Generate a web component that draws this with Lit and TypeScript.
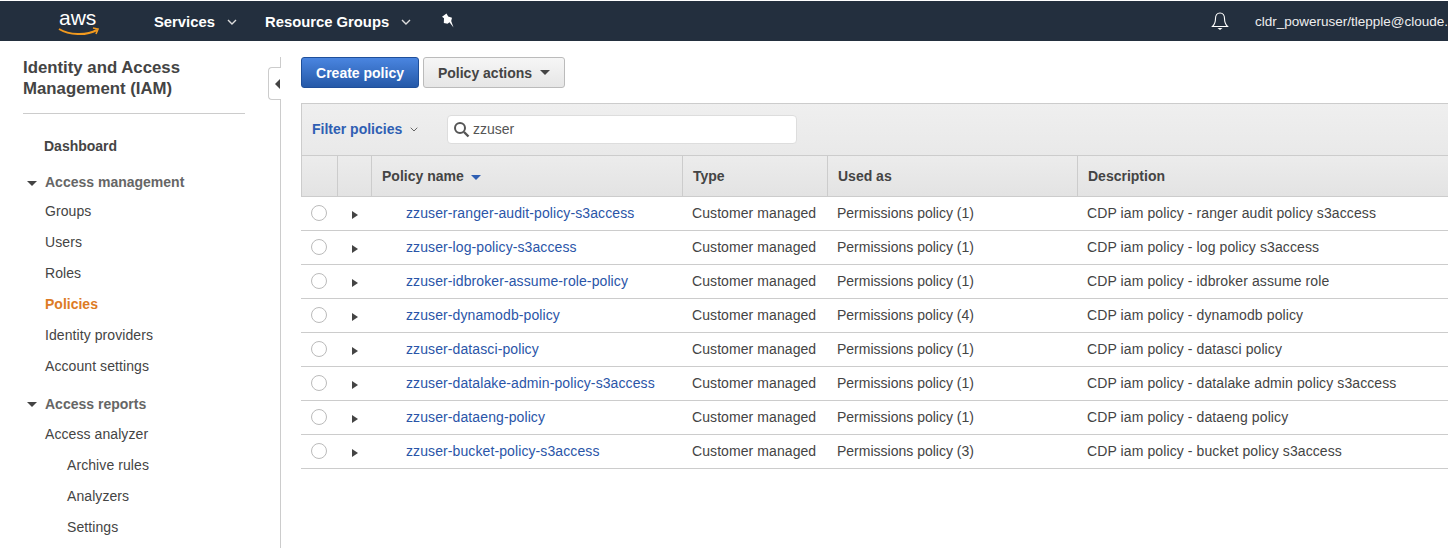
import { LitElement, html, css, svg } from "lit";
import { customElement } from "lit/decorators.js";

const rows = [
  ["zzuser-ranger-audit-policy-s3access", "Permissions policy (1)", "CDP iam policy - ranger audit policy s3access"],
  ["zzuser-log-policy-s3access", "Permissions policy (1)", "CDP iam policy - log policy s3access"],
  ["zzuser-idbroker-assume-role-policy", "Permissions policy (1)", "CDP iam policy - idbroker assume role"],
  ["zzuser-dynamodb-policy", "Permissions policy (4)", "CDP iam policy - dynamodb policy"],
  ["zzuser-datasci-policy", "Permissions policy (1)", "CDP iam policy - datasci policy"],
  ["zzuser-datalake-admin-policy-s3access", "Permissions policy (1)", "CDP iam policy - datalake admin policy s3access"],
  ["zzuser-dataeng-policy", "Permissions policy (1)", "CDP iam policy - dataeng policy"],
  ["zzuser-bucket-policy-s3access", "Permissions policy (3)", "CDP iam policy - bucket policy s3access"],
];

const chevron = svg`<svg class="chev" width="10" height="6" viewBox="0 0 10 6"><path d="M1 1l4 4 4-4" fill="none" stroke="currentColor" stroke-width="1.4"/></svg>`;
const smallChevron = svg`<svg class="chev" width="8" height="5" viewBox="0 0 8 5"><path d="M.7.7L4 4 7.300.7" fill="none" stroke="currentColor" stroke-width="1"/></svg>`;

@customElement("app-root")
export class AppRoot extends LitElement {
  static styles = css`
    :host {
      display: block;
      width: 1448px;
      height: 548px;
      overflow: hidden;
      background: #fff;
      font-family: "Liberation Sans", Arial, sans-serif;
      font-size: 14px;
      color: #444;
    }
    .top {
      margin-top: 1px;
      height: 40px;
      background: #232f3e;
      color: #fff;
      display: flex;
      align-items: center;
      white-space: nowrap;
      overflow: hidden;
    }
    .top > * { flex: none; }
    .logo { margin-left: 58px; margin-right: 54px; display: block; }
    .menu { font-weight: 700; font-size: 14.800px; display: flex; align-items: center; padding-top: 1px; }
    .menu .chev { margin-left: 12px; color: #ddd; }
    .menu.services { width: 111px; }
    .menu.groups { width: 176px; }
    .pin { display: block; margin-bottom: 1px; }
    .bell { margin-left: 756px; margin-right: 26px; display: block; }
    .account { font-size: 13.500px; color: #eee; }
    .body { display: flex; height: 507px; }
    .side {
      width: 281px;
      flex: none;
      box-sizing: border-box;
      padding: 16px 35px 0 23px;
      position: relative;
    }
    .side::after {
      content: "";
      position: absolute;
      right: 0;
      top: 16px;
      bottom: 0;
      width: 1px;
      background: #ccc;
    }
    .tab {
      position: absolute;
      right: 0;
      top: 26px;
      width: 13px;
      height: 33px;
      box-sizing: border-box;
      background: #fff;
      border: 1px solid #ccc;
      border-right: 0;
      border-radius: 4px 0 0 4px;
      z-index: 1;
      display: flex;
      align-items: center;
      justify-content: flex-end;
    }
    .tab i {
      border: 5px solid transparent;
      border-left: 0;
      border-right: 5px solid #444;
      margin-right: 1px;
    }
    h1 {
      margin: 0;
      font-size: 16.800px;
      line-height: 21px;
      font-weight: 700;
      color: #444;
      padding-bottom: 14px;
      border-bottom: 1px solid #ccc;
      width: 222px;
    }
    nav { display: flex; flex-direction: column; margin-top: 17px; letter-spacing: 0.08px; }
    nav a { height: 31px; line-height: 31px; padding-left: 22px; color: #444; }
    nav a.dash { font-weight: 700; height: 31px; margin-bottom: 7px; padding-left: 21px; letter-spacing: 0; }
    nav a.sec {
      font-weight: 700;
      color: #666;
      position: relative;
      height: 27px;
      line-height: 27px;
      letter-spacing: 0;
    }
    nav a.sec::before {
      content: "";
      position: absolute;
      left: 4px;
      top: 12px;
      border: 5px solid transparent;
      border-top: 5px solid #444;
      border-bottom: 0;
    }
    nav a.sec.second { margin-top: 7px; height: 30px; line-height: 30px; }
    nav a.sec.second::before { top: 13px; }
    nav a.on { color: #dd7b25; font-weight: 700; letter-spacing: 0; }
    nav a.sub { padding-left: 44px; }
    main { flex: 1; min-width: 0; padding: 16px 0 0 20px; box-sizing: border-box; overflow: hidden; }
    .actions { display: flex; gap: 4px; height: 31px; }
    .btn {
      box-sizing: border-box;
      height: 31px;
      border-radius: 3px;
      font-weight: 700;
      font-size: 14px;
      display: flex;
      align-items: center;
      justify-content: center;
    }
    .primary {
      width: 118px;
      color: #fff;
      background: linear-gradient(#4a85e0, #2559a8);
      border: 1px solid #1f4f9a;
    }
    .secondary {
      width: 142px;
      color: #444;
      background: linear-gradient(#f6f6f6, #e6e6e6);
      border: 1px solid #bbb;
      gap: 8px;
    }
    .secondary i {
      border: 5px solid transparent;
      border-top: 5px solid #444;
      border-bottom: 0;
    }
    .filter {
      margin-top: 15px;
      width: 1200px;
      height: 52px;
      box-sizing: border-box;
      background: linear-gradient(#efefef, #e9e9e9);
      border: 1px solid #ccc;
      border-bottom: 0;
      display: flex;
      align-items: center;
      padding: 0 0 1px 10px;
    }
    .filter .label { color: #2f5fb3; font-weight: 700; width: 135px; display: flex; align-items: center; }
    .filter .chev { margin-left: 8px; color: #666; }
    .search {
      width: 350px;
      height: 29px;
      box-sizing: border-box;
      background: #fff;
      border: 1px solid #ddd;
      border-radius: 4px;
      display: flex;
      align-items: center;
      gap: 3px;
      padding-left: 5px;
      color: #555;
    }
    .grid {
      display: grid;
      grid-template-columns: 37px 34px 311px 145px 250px 423px;
      width: 1200px;
    }
    .head {
      height: 42px;
      box-sizing: border-box;
      background: linear-gradient(#ececec, #e3e3e3);
      border-top: 1px solid #ccc;
      border-bottom: 1px solid #ccc;
      border-right: 1px solid #ccc;
      font-weight: 700;
      display: flex;
      align-items: center;
      padding-left: 10px;
    }
    .head.first { border-left: 1px solid #ccc; }
    .head.name { gap: 7px; }
    .head.name i {
      border: 5px solid transparent;
      border-top: 5px solid #2f5fb3;
      border-bottom: 0;
      margin-top: 2px;
    }
    .cell {
      height: 34px;
      box-sizing: border-box;
      border-bottom: 1px solid #ccc;
      display: flex;
      align-items: center;
      padding: 0 0 2px 9px;
      white-space: nowrap;
      color: #444;
      letter-spacing: 0.08px;
    }
    .cell.name { padding-left: 34px; color: #2a55a8; letter-spacing: 0.1px; }
    .cell.used { letter-spacing: 0; }
    .cell.desc { letter-spacing: 0.1px; }
    .cell.radio { padding-left: 10px; }
    .cell.radio span {
      width: 16px;
      height: 16px;
      box-sizing: border-box;
      border: 1px solid #bbb;
      border-radius: 50%;
      background: #fff;
    }
    .cell.arrow { padding: 3px 0 0 14px; }
    .cell.arrow i {
      border: 4.500px solid transparent;
      border-right: 0;
      border-left: 6px solid #444;
    }
  `;

  render() {
    return html`
      <div class="top">
        <svg class="logo" width="42" height="34" viewBox="0 0 42 34">
          <text x="1" y="21" font-family="Liberation Sans, Arial, sans-serif" font-size="21" fill="#fff">aws</text>
          <path d="M1 25c10 6 27 7 38 1" fill="none" stroke="#f29a1f" stroke-width="2"/>
          <path d="M35 24l5 1-2 5" fill="none" stroke="#f29a1f" stroke-width="1.600"/>
        </svg>
        <div class="menu services">Services${chevron}</div>
        <div class="menu groups">Resource Groups${chevron}</div>
        <svg class="pin" width="14" height="15" viewBox="0 0 14 15"><path d="M5.500.5L1 3.800l2 1.400-.2 4.800 3.700.8 2-1.600 4 5.300-2.300-6.600.8-3.100-3.800-1.300z" fill="#fff"/></svg>
        <svg class="bell" width="18" height="20" viewBox="0 0 18 20">
          <path d="M9 2C6 2 4.500 4.500 4.500 7.500c0 4-1 6-3 8h15c-2-2-3-4-3-8C13.500 4.500 12 2 9 2z" fill="none" stroke="#fff" stroke-width="1.100"/>
          <path d="M6.500 17h5L9 19z" fill="#fff"/>
        </svg>
        <span class="account">cldr_poweruser/tlepple@cloude.</span>
      </div>
      <div class="body">
        <aside class="side">
          <div class="tab"><i></i></div>
          <h1>Identity and Access Management (IAM)</h1>
          <nav>
            <a class="dash">Dashboard</a>
            <a class="sec">Access management</a>
            <a>Groups</a>
            <a>Users</a>
            <a>Roles</a>
            <a class="on">Policies</a>
            <a>Identity providers</a>
            <a>Account settings</a>
            <a class="sec second">Access reports</a>
            <a>Access analyzer</a>
            <a class="sub">Archive rules</a>
            <a class="sub">Analyzers</a>
            <a class="sub">Settings</a>
          </nav>
        </aside>
        <main>
          <div class="actions">
            <div class="btn primary">Create policy</div>
            <div class="btn secondary">Policy actions <i></i></div>
          </div>
          <div class="filter">
            <div class="label">Filter policies${smallChevron}</div>
            <div class="search">
              <svg width="17" height="17" viewBox="0 0 17 17"><circle cx="7" cy="7" r="5" fill="none" stroke="#555" stroke-width="2"/><path d="M11 11l4.500 4.500" stroke="#555" stroke-width="2.400"/></svg>
              zzuser
            </div>
          </div>
          <div class="grid">
            <div class="head first"></div>
            <div class="head"></div>
            <div class="head name">Policy name <i></i></div>
            <div class="head">Type</div>
            <div class="head">Used as</div>
            <div class="head">Description</div>
            ${rows.map(
              (r) => html`
                <div class="cell radio"><span></span></div>
                <div class="cell arrow"><i></i></div>
                <div class="cell name">${r[0]}</div>
                <div class="cell">Customer managed</div>
                <div class="cell used">${r[1]}</div>
                <div class="cell desc">${r[2]}</div>
              `
            )}
          </div>
        </main>
      </div>
    `;
  }
}
